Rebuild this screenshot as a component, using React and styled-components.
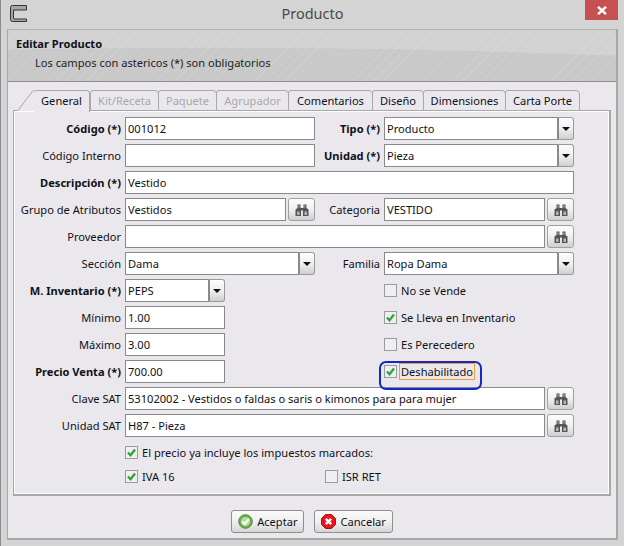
import styled, { createGlobalStyle } from "styled-components";

const GlobalStyle = createGlobalStyle`
  html, body {
    margin: 0;
    padding: 0;
  }
  body {
    background: #d4d4d4;
    font-family: "Noto Sans", "Open Sans", sans-serif;
    font-size: 11.1px;
    color: #101018;
  }
`;

const Window = styled.div`
  box-sizing: border-box;
  width: 624px;
  height: 546px;
  background: #d4d4d4;
  border-left: 1px solid #8c8c8c;
  display: flex;
  flex-direction: column;
  padding: 0 6px 6px 6px;
  overflow: hidden;
`;

const TitleBar = styled.div`
  height: 29px;
  flex: none;
  display: flex;
  align-items: flex-start;
  padding: 5px 0 0 3px;
  box-sizing: border-box;
  position: relative;
`;

const TitleText = styled.div`
  position: absolute;
  left: 0;
  right: 0;
  top: 3px;
  text-align: center;
  font-size: 14.5px;
  line-height: 20px;
  color: #4a4a4a;
`;

const CloseButton = styled.div`
  position: absolute;
  top: 0;
  right: 0;
  width: 33px;
  height: 20px;
  background: #c75050;
  display: flex;
  align-items: center;
  justify-content: center;
`;

const Panel = styled.div`
  flex: 1;
  display: flex;
  flex-direction: column;
  border: 1px solid #a8a8a8;
  border-top-color: #b4b4b4;
  border-right-width: 2px;
  border-bottom-width: 2px;
  background: #eae8ed;
`;

const Header = styled.div`
  height: 52px;
  flex: none;
  box-sizing: border-box;
  position: relative;
  overflow: hidden;
  border-bottom: 1px solid #8e8e8e;
  background:
    repeating-linear-gradient(135deg, rgba(255, 255, 255, 0.09) 0 1px, transparent 1px 7px),
    #c9c9c9;
`;

const HeaderShine = styled.svg`
  position: absolute;
  left: 0;
  top: 0;
  width: 100%;
  height: 100%;
`;

const HeaderTitle = styled.div`
  position: absolute;
  left: 8px;
  top: 6px;
  font-weight: 700;
  line-height: 15px;
`;

const HeaderNote = styled.div`
  position: absolute;
  left: 27px;
  top: 25px;
  line-height: 15px;
  color: #222;
`;

const Body = styled.div`
  flex: 1;
  display: flex;
  flex-direction: column;
  padding: 8px 5px 0 5px;
`;

const TabBar = styled.div`
  display: flex;
  height: 20px;
  padding-left: 21px;
  position: relative;
  z-index: 1;
`;

const Tab = styled.div`
  box-sizing: border-box;
  flex: none;
  width: ${(p) => p.$width}px;
  height: ${(p) => (p.$active ? "22px" : "21px")};
  margin-right: ${(p) => (p.$active ? "0" : "-1px")};
  line-height: 20px;
  text-align: center;
  background: #eae8ed;
  color: ${(p) => (p.$disabled ? "#a8a8a8" : "#101018")};
  border: 1px solid #a8a8a8;
  border-bottom: ${(p) => (p.$active ? "none" : "1px solid #a8a8a8")};
  border-left: ${(p) => (p.$active ? "none" : "1px solid #a8a8a8")};
  border-radius: 3px 4px 0 0;
  white-space: nowrap;
  position: relative;
`;

const TabSlant = styled.svg`
  position: absolute;
  left: -16px;
  top: -1px;
`;

const Pane = styled.div`
  box-sizing: border-box;
  height: 386px;
  border: 1px solid #a8a8a8;
  border-bottom-width: 2px;
  border-right-width: 2px;
  box-shadow: inset 0 0 0 1px #fff;
  padding: 6px 0 0 0;
`;

const FormGrid = styled.div`
  display: grid;
  grid-template-columns: 107px 190px 61px 190px;
  grid-auto-rows: 23px;
  column-gap: 4px;
  row-gap: 4px;
  align-items: center;
`;

const Label = styled.label`
  text-align: right;
  white-space: nowrap;
  font-weight: ${(p) => (p.$bold ? 700 : 400)};
  justify-self: end;
  line-height: 23px;
`;

const Field = styled.div`
  display: flex;
  gap: 2px;
  grid-column: ${(p) => p.$span || "auto"};
  width: ${(p) => (p.$width ? `${p.$width}px` : "auto")};
`;

const Input = styled.div`
  flex: 1;
  min-width: 0;
  box-sizing: border-box;
  height: 23px;
  padding: 0 2px;
  background: #fff;
  border: 1px solid #8a8a8a;
  line-height: 21px;
  white-space: nowrap;
  overflow: hidden;
`;

const ComboArrow = styled.div`
  box-sizing: border-box;
  flex: none;
  width: 16px;
  height: 23px;
  margin-left: -2px;
  border: 1px solid #9a9a9a;
  border-left-color: #8a8a8a;
  border-radius: 0 3px 3px 0;
  background: linear-gradient(#fdfdfd, #f0f0f0 50%, #cfcfcf);
  display: flex;
  align-items: center;
  justify-content: center;
  &::after {
    content: "";
    border-left: 4px solid transparent;
    border-right: 4px solid transparent;
    border-top: 4px solid #111;
  }
`;

const SearchButton = styled.div`
  box-sizing: border-box;
  flex: none;
  width: 27px;
  height: 23px;
  border: 1px solid #a0a0a0;
  border-radius: 3px;
  background: linear-gradient(#fdfdfd, #f0f0f0 50%, #cfcfcf);
  display: flex;
  align-items: center;
  justify-content: center;
`;

const CheckRow = styled.div`
  display: flex;
  align-items: center;
  gap: 4px;
  grid-column: ${(p) => p.$span || "auto"};
  position: relative;
`;

const Box = styled.span`
  box-sizing: border-box;
  flex: none;
  width: 13px;
  height: 13px;
  background: #efeff1;
  border: 1px solid #9c9c9c;
  display: flex;
  align-items: center;
  justify-content: center;
`;

const CheckText = styled.span`
  white-space: nowrap;
  line-height: 15px;
`;

const FocusText = styled(CheckText)`
  margin-left: -1px;
  padding: 0 1px;
  outline: 1px solid #f0a030;
`;

const Highlight = styled.div`
  position: absolute;
  left: -5px;
  top: -3px;
  width: 103px;
  height: 29px;
  box-sizing: border-box;
  border: 2.5px solid #1428c4;
  border-radius: 7px;
  pointer-events: none;
`;

const TaxRow = styled.div`
  grid-column: 2 / 5;
  display: flex;
  align-items: center;
  margin-bottom: 7px;
`;

const TaxItem = styled.div`
  width: ${(p) => p.$width}px;
  flex: none;
`;

const Footer = styled.div`
  flex: 1;
  display: flex;
  justify-content: center;
  align-items: center;
  gap: 10px;
  padding-top: 9px;
`;

const Button = styled.div`
  box-sizing: border-box;
  height: 23px;
  padding: 0 6px;
  display: flex;
  align-items: center;
  gap: 4px;
  border: 1px solid #8f8f8f;
  border-radius: 3px;
  background: linear-gradient(#fafafa, #f0f0f0 50%, #d6d6d6);
`;

const Check = () => (
  <svg width="9" height="9" viewBox="0 0 11 11">
    <path d="M1.2 5.5 L4.3 8.8 L9.8 1.8" fill="none" stroke="#2fa52f" strokeWidth="2.8" />
  </svg>
);

const CheckField = ({ checked, children, span }) => (
  <CheckRow $span={span}>
    <Box>{checked && <Check />}</Box>
    <CheckText>{children}</CheckText>
  </CheckRow>
);

const Binoculars = () => (
  <svg width="14" height="12" viewBox="0 0 14 12">
    <path d="M2.5 .5h3V4h3V.5h3V4L13.5 5.5V12H8V6.5H6V12H.5V5.5L2.5 4z" fill="#555" />
    <rect x="3" y="1.5" width="2" height="2" fill="#8c8c8c" />
    <rect x="9" y="1.5" width="2" height="2" fill="#8c8c8c" />
    <rect x="2" y="7.5" width="2.5" height="3.5" fill="#b4b4b4" />
    <rect x="9.5" y="7.5" width="2.5" height="3.5" fill="#b4b4b4" />
  </svg>
);

const AppIcon = () => (
  <svg width="17" height="17" viewBox="0 0 17 17">
    <path
      d="M16.5 .5H2.5Q.5 .5 .5 2.5V14.5Q.5 16.5 2.5 16.5H16.5V14H4.5Q3.5 14 3.5 13V5H16.5Z"
      fill="#a6a6a6"
      stroke="#333"
    />
  </svg>
);

const OkIcon = () => (
  <svg width="15" height="15" viewBox="0 0 15 15">
    <circle cx="7.5" cy="7.5" r="6.8" fill="#6ab04c" stroke="#4d8f38" />
    <circle cx="7.5" cy="7.5" r="4.6" fill="#b5dca0" />
    <path d="M4.3 7.6 L6.7 10 L10.8 5.2" fill="none" stroke="#fff" strokeWidth="2" />
  </svg>
);

const CancelIcon = () => (
  <svg width="15" height="15" viewBox="0 0 15 15">
    <path d="M4.5.5h6l4 4v6l-4 4h-6l-4-4v-6z" fill="#e8141c" stroke="#b01018" />
    <path d="M4.8 4.8 L10.2 10.2 M10.2 4.8 L4.8 10.2" stroke="#fff" strokeWidth="2.4" />
  </svg>
);

const tabs = [
  { name: "Kit/Receta", width: 69, disabled: true },
  { name: "Paquete", width: 59, disabled: true },
  { name: "Agrupador", width: 73, disabled: true },
  { name: "Comentarios", width: 85 },
  { name: "Diseño", width: 52 },
  { name: "Dimensiones", width: 83 },
  { name: "Carta Porte", width: 75 },
];

const App = () => (
  <>
    <GlobalStyle />
    <Window>
      <TitleBar>
        <AppIcon />
        <TitleText>Producto</TitleText>
        <CloseButton>
          <svg width="10" height="9" viewBox="0 0 10 9">
            <path d="M1 .8 L9 8.2 M9 .8 L1 8.2" stroke="#fff" strokeWidth="2.4" />
          </svg>
        </CloseButton>
      </TitleBar>
      <Panel>
        <Header>
          <HeaderShine viewBox="0 0 610 52" preserveAspectRatio="none">
            <path d="M0 0H610V26Q300 14 0 20Z" fill="#fff" opacity="0.18" />
          </HeaderShine>
          <HeaderTitle>Editar Producto</HeaderTitle>
          <HeaderNote>Los campos con astericos (*) son obligatorios</HeaderNote>
        </Header>
        <Body>
          <TabBar>
            <Tab $active $width={56}>
              <TabSlant width="16" height="21" viewBox="0 0 16 21">
                <path d="M0 21 L15 1 H16 V21Z" fill="#eae8ed" />
                <path d="M0 20.5 L15 .5 H16" fill="none" stroke="#a8a8a8" />
              </TabSlant>
              General
            </Tab>
            {tabs.map((t) => (
              <Tab key={t.name} $width={t.width} $disabled={t.disabled}>
                {t.name}
              </Tab>
            ))}
          </TabBar>
          <Pane>
            <FormGrid>
              <Label $bold>Código (*)</Label>
              <Field><Input>001012</Input></Field>
              <Label $bold>Tipo (*)</Label>
              <Field><Input>Producto</Input><ComboArrow /></Field>

              <Label>Código Interno</Label>
              <Field><Input /></Field>
              <Label $bold>Unidad (*)</Label>
              <Field><Input>Pieza</Input><ComboArrow /></Field>

              <Label $bold>Descripción (*)</Label>
              <Field $span="2 / 5"><Input>Vestido</Input></Field>

              <Label>Grupo de Atributos</Label>
              <Field><Input>Vestidos</Input><SearchButton><Binoculars /></SearchButton></Field>
              <Label>Categoria</Label>
              <Field><Input>VESTIDO</Input><SearchButton><Binoculars /></SearchButton></Field>

              <Label>Proveedor</Label>
              <Field $span="2 / 5"><Input /><SearchButton><Binoculars /></SearchButton></Field>

              <Label>Sección</Label>
              <Field><Input>Dama</Input><ComboArrow /></Field>
              <Label>Familia</Label>
              <Field><Input>Ropa Dama</Input><ComboArrow /></Field>

              <Label $bold>M. Inventario (*)</Label>
              <Field $width={100}><Input>PEPS</Input><ComboArrow /></Field>
              <CheckField span="4">No se Vende</CheckField>

              <Label>Mínimo</Label>
              <Field $width={100}><Input>1.00</Input></Field>
              <CheckField span="4" checked>Se Lleva en Inventario</CheckField>

              <Label>Máximo</Label>
              <Field $width={100}><Input>3.00</Input></Field>
              <CheckField span="4">Es Perecedero</CheckField>

              <Label $bold>Precio Venta (*)</Label>
              <Field $width={100}><Input>700.00</Input></Field>
              <CheckRow $span="4">
                <Box><Check /></Box>
                <FocusText>Deshabilitado</FocusText>
                <Highlight />
              </CheckRow>

              <Label>Clave SAT</Label>
              <Field $span="2 / 5">
                <Input>53102002 - Vestidos o faldas o saris o kimonos para para mujer</Input>
                <SearchButton><Binoculars /></SearchButton>
              </Field>

              <Label>Unidad SAT</Label>
              <Field $span="2 / 5">
                <Input>H87 - Pieza</Input>
                <SearchButton><Binoculars /></SearchButton>
              </Field>

              <CheckField span="2 / 5" checked>El precio ya incluye los impuestos marcados:</CheckField>

              <TaxRow>
                <TaxItem $width={200}><CheckField checked>IVA 16</CheckField></TaxItem>
                <TaxItem $width={120}><CheckField>ISR RET</CheckField></TaxItem>
              </TaxRow>
            </FormGrid>
          </Pane>
          <Footer>
            <Button><OkIcon />Aceptar</Button>
            <Button><CancelIcon />Cancelar</Button>
          </Footer>
        </Body>
      </Panel>
    </Window>
  </>
);

export default App;
